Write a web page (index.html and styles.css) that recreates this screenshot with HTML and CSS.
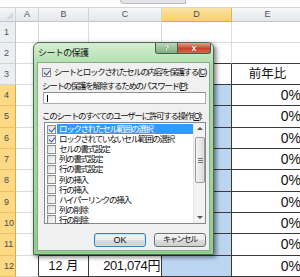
FILE: index.html
```html
<!DOCTYPE html>
<html lang="ja">
<head>
<meta charset="utf-8">
<title>シートの保護</title>
<link rel="stylesheet" href="styles.css">
</head>
<body>
<div class="app">
  <div class="topbar"><div class="fx"></div></div>
  <div class="sheet">
    <div class="ch corner"><span class="tri"></span></div>
    <div class="ch">A</div>
    <div class="ch">B</div>
    <div class="ch">C</div>
    <div class="ch sel">D</div>
    <div class="ch">E</div>

    <div class="rh">1</div><div class="c"></div><div class="c"></div><div class="c"></div><div class="c"></div><div class="c"></div>
    <div class="rh">2</div><div class="c"></div><div class="c tt"></div><div class="c tt"></div><div class="c tt"></div><div class="c tt"></div>
    <div class="rh">3</div><div class="c tl"></div><div class="c t"></div><div class="c t"></div><div class="c t"></div><div class="c t ctr">前年比</div>
    <div class="rh on">4</div><div class="c tl"></div><div class="c t"></div><div class="c t"></div><div class="c t blue"></div><div class="c t num">0%</div>
    <div class="rh on">5</div><div class="c tl"></div><div class="c t"></div><div class="c t"></div><div class="c t blue"></div><div class="c t num">0%</div>
    <div class="rh on">6</div><div class="c tl"></div><div class="c t"></div><div class="c t"></div><div class="c t blue"></div><div class="c t num">0%</div>
    <div class="rh on">7</div><div class="c tl"></div><div class="c t"></div><div class="c t"></div><div class="c t blue"></div><div class="c t num">0%</div>
    <div class="rh on">8</div><div class="c tl"></div><div class="c t"></div><div class="c t"></div><div class="c t blue"></div><div class="c t num">0%</div>
    <div class="rh on">9</div><div class="c tl"></div><div class="c t"></div><div class="c t"></div><div class="c t blue"></div><div class="c t num">0%</div>
    <div class="rh on">10</div><div class="c tl"></div><div class="c t"></div><div class="c t"></div><div class="c t blue"></div><div class="c t num">0%</div>
    <div class="rh on">11</div><div class="c tl"></div><div class="c t"></div><div class="c t"></div><div class="c t blue"></div><div class="c t num">0%</div>
    <div class="rh on">12</div><div class="c tl"></div><div class="c t ctr">12 月</div><div class="c t num yen">201,074円</div><div class="c t blue"></div><div class="c t num">0%</div>
  </div>

  <div class="dialog">
    <div class="titlebar">
      <span class="title">シートの保護</span>
      <span class="cap help">?</span>
      <span class="cap close">x</span>
    </div>
    <div class="panel">
      <div class="row chkrow"><span class="cb on"></span><span>シートとロックされたセルの内容を保護する(<u>C</u>)</span></div>
      <div class="row lbl lbl2">シートの保護を解除するためのパスワード(<u>P</u>):</div>
      <div class="textbox"><span class="caret"></span></div>
      <div class="row lbl lbl3">このシートのすべてのユーザーに許可する操作(<u>O</u>):</div>
      <div class="listbox">
        <div class="items">
          <div class="it"><span class="cb on"></span><span class="txt hl">ロックされたセル範囲の選択</span></div>
          <div class="it"><span class="cb on"></span><span class="txt">ロックされていないセル範囲の選択</span></div>
          <div class="it"><span class="cb"></span><span class="txt">セルの書式設定</span></div>
          <div class="it"><span class="cb"></span><span class="txt">列の書式設定</span></div>
          <div class="it"><span class="cb"></span><span class="txt">行の書式設定</span></div>
          <div class="it"><span class="cb"></span><span class="txt">列の挿入</span></div>
          <div class="it"><span class="cb"></span><span class="txt">行の挿入</span></div>
          <div class="it"><span class="cb"></span><span class="txt">ハイパーリンクの挿入</span></div>
          <div class="it"><span class="cb"></span><span class="txt">列の削除</span></div>
          <div class="it"><span class="cb"></span><span class="txt">行の削除</span></div>
        </div>
        <div class="vscroll">
          <span class="arr up"></span>
          <span class="thumb"><i></i><i></i><i></i></span>
          <span class="arr down"></span>
        </div>
      </div>
      <div class="btns">
        <span class="btn def">OK</span>
        <span class="btn">キャンセル</span>
      </div>
    </div>
  </div>
</div>
</body>
</html>
```

FILE: styles.css
```css
* { box-sizing: border-box; }
html, body { margin: 0; padding: 0; background: #fff; }
body { width: 300px; height: 277px; overflow: hidden; font-family: "Liberation Sans", "Noto Sans CJK JP", sans-serif; }
.app { position: relative; width: 300px; height: 277px; overflow: hidden; }

.topbar { height: 8px; background: #fff; border-bottom: 1px solid #d5d5d5; }
.fx { margin-left: 120px; width: 66px; height: 4px; background: #e2e4e8; border: 1px solid #b9bec6; border-top: 0; border-radius: 0 0 0 5px; }

.sheet {
  display: grid;
  grid-template-columns: 16px 23px 50px 73px 70px 72px;
  grid-template-rows: 14px 21px 21px 21px 21px 22px 21px 21px 22px 21px 21px 22px 21px;
}
.ch {
  background: linear-gradient(#f6f7f9, #e4e6ea);
  border-right: 1px solid #d0d3d8;
  border-bottom: 1px solid #c2c6cc;
  color: #505460;
  font-size: 9px;
  line-height: 13px;
  text-align: center;
}
.ch:last-child { padding-right: 4px; }
.ch.sel { background: linear-gradient(#fbe3a6, #f6cf6f); border-right-color: #e4b54d; border-bottom-color: #e2a83a; color: #4a4a4a; }
.corner { position: relative; }
.tri { position: absolute; right: 2px; bottom: 2px; width: 0; height: 0; border-left: 7px solid transparent; border-bottom: 7px solid #d6d9de; }
.rh {
  background: #eceef1;
  border-right: 1px solid #c2c6cc;
  border-bottom: 1px solid #d0d3d8;
  color: #505460;
  font-size: 9px;
  line-height: 20px;
  padding-left: 4px;
}
.rh.on { background: #fbd985; border-bottom-color: #e9c062; border-right-color: #e2a83a; color: #4a4a4a; }
.c { border-right: 1px solid #dadcdd; border-bottom: 1px solid #dadcdd; font-size: 14px; line-height: 20px; color: #111; }
.c.tt { border-bottom-color: #3a3a3a; }
.c.tl { border-right-color: #3a3a3a; }
.c.t { border-right-color: #3a3a3a; border-bottom-color: #3a3a3a; }
.c.blue { background: #bcd6f2; }
.c.ctr { text-align: center; font-size: 12.5px; }
.c.num { text-align: right; padding-right: 2px; }
.c.yen { font-size: 13px; letter-spacing: -0.4px; padding-right: 1px; }

/* dialog */
.dialog {
  position: absolute;
  left: 33px; top: 42px;
  width: 181px; height: 213px;
  border: 1px solid #4f6b55;
  border-radius: 6px 6px 0 0;
  background: linear-gradient(180deg, #d6eed3 0%, #a9dca5 12%, #9ed79a 60%, #8fce8c 100%);
  box-shadow: 2px 2px 5px rgba(0,0,0,0.55);
  font-family: "Liberation Sans", "Noto Sans CJK JP", sans-serif;
  color: #111;
}
.titlebar { position: relative; height: 19px; }
.title { position: absolute; left: 4px; top: 4px; font-size: 9px; line-height: 12px; letter-spacing: -0.6px; color: #111; }
.cap { position: absolute; top: 0; height: 11px; border: 1px solid #46604a; border-top: 0; color: #fff; font-size: 9px; line-height: 10px; text-align: center; font-weight: bold; }
.help { left: 121px; width: 23px; background: linear-gradient(#b9d8b8, #7fae80); border-radius: 0 0 0 3px; text-shadow: 0 0 1px #333; }
.close { left: 143px; width: 34px; background: linear-gradient(#e8a08e, #c7442e 55%, #d36a4f); border-radius: 0 0 3px 0; text-shadow: 0 0 1px #5a0000; }

.panel {
  margin: 0 3px;
  height: 189px;
  background: #f0f0f0;
  border: 1px solid #8aa88d;
  padding: 3px 0 0 4px;
  font-size: 8.5px;
  line-height: 10px;
  letter-spacing: -1.3px;
}
.row { display: flex; align-items: center; white-space: nowrap; }
.chkrow { height: 12px; gap: 3px; }
.lbl { height: 10px; }
.lbl2 { margin-top: 3px; }
.lbl3 { margin-top: 7px; }
.cb { flex: none; width: 9px; height: 9px; border: 1px solid #8e8f8f; background: linear-gradient(135deg, #dcdcdc, #fbfbfb); position: relative; }
.cb.on::after { content: ""; position: absolute; left: 2px; top: 0px; width: 3px; height: 5px; border-right: 1.5px solid #2e4ea6; border-bottom: 1.5px solid #2e4ea6; transform: rotate(40deg); }
.textbox { margin: 1px 0 0 1px; width: 163px; height: 12px; background: #fff; border: 1px solid #abadb3; border-top-color: #8e8f8f; position: relative; }
.caret { position: absolute; left: 3px; top: 2px; width: 1px; height: 7px; background: #000; }
.listbox { margin: 1px 0 0 2px; width: 162px; height: 102px; background: #fff; border: 1px solid #828790; display: flex; }
.items { flex: 1; padding: 1px 0 0 2px; }
.it { display: flex; align-items: center; height: 10.1px; gap: 1px; white-space: nowrap; }
.txt { padding: 0 2px; line-height: 10px; }
.txt.hl { background: #3399ff; color: #fff; flex: 1; }
.vscroll { width: 12px; background: #f2f2f2; border-left: 1px solid #e6e6e6; position: relative; }
.arr { position: absolute; left: 3px; width: 0; height: 0; border-left: 3px solid transparent; border-right: 3px solid transparent; }
.arr.up { top: 4px; border-bottom: 3px solid #555; }
.arr.down { bottom: 4px; border-top: 3px solid #555; }
.thumb { position: absolute; left: 1px; top: 14px; width: 10px; height: 46px; border: 1px solid #9a9a9a; border-radius: 2px; background: linear-gradient(90deg, #f3f3f3, #dcdcdc); display: flex; flex-direction: column; justify-content: center; align-items: center; gap: 1px; }
.thumb i { display: block; width: 5px; height: 1px; background: #777; }
.btns { display: flex; gap: 8px; margin: 9px 0 0 52px; }
.btn { width: 52px; height: 14px; border: 1px solid #707070; border-radius: 3px; background: linear-gradient(#f4f4f4 0%, #ebebeb 50%, #dddddd 51%, #cfcfcf 100%); font-size: 8px; line-height: 12px; text-align: center; letter-spacing: -1.2px; }
.btn.def { border-color: #3c7fb1; box-shadow: inset 0 0 0 1px #bfe6fa; font-size: 9px; letter-spacing: 0; }
```
